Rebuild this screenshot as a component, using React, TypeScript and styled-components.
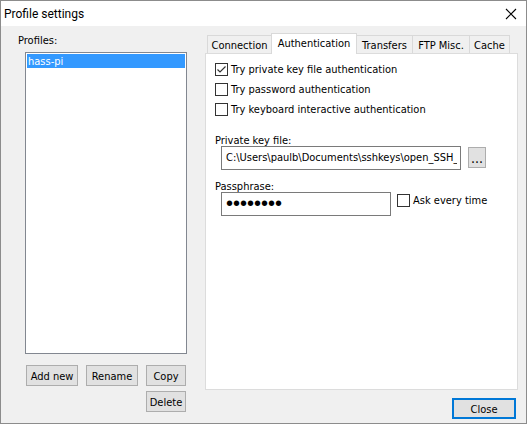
import React, { useState } from "react";
import styled, { createGlobalStyle } from "styled-components";

const GlobalStyle = createGlobalStyle`
  *, *::before, *::after { box-sizing: border-box; }
  body { margin: 0; }
  body, button, input, select {
    font-family: "DejaVu Sans Condensed", "DejaVu Sans", sans-serif;
    font-size: 11px;
    line-height: 14px;
    color: #000;
  }
`;

const Dialog = styled.main`
  display: flex;
  flex-direction: column;
  min-height: 100vh;
  border: 1px solid #8c8c8c;
  background: #f0f0f0;
`;

const TitleBar = styled.header`
  display: flex;
  align-items: center;
  justify-content: space-between;
  height: 25px;
  padding: 0 9px 0 3px;
  background: #fff;
`;

const Title = styled.h1`
  margin: 0;
  font: 400 12px/16px Roboto, sans-serif;
`;

const CloseIcon = styled.button`
  display: flex;
  padding: 0;
  border: 0;
  background: none;
`;

const Body = styled.div`
  flex: 1;
  display: flex;
  gap: 18px;
  padding: 0 8px 0 17px;
`;

const Sidebar = styled.section`
  display: flex;
  flex-direction: column;
  width: 169px;
  padding: 8px 0 11px;
`;

const ProfileList = styled.select`
  flex: 1;
  margin: 4px 0 0 7px;
  padding: 1px;
  border: 1px solid #828790;
  border-radius: 0;
  background: #fff;
  outline: 0;
  overflow: hidden;
`;

const ProfileOption = styled.option`
  min-height: 13px;
  padding: 1px 1px 0;
  line-height: 12px;

  &:checked {
    color: #fff;
    background: #39f linear-gradient(#39f, #39f);
  }
`;

const ButtonGrid = styled.div`
  display: grid;
  grid-template-columns: 52px 52px 40px;
  gap: 5px 8px;
  margin: 11px 0 0 8px;
`;

const PushButton = styled.button<{ $lastColumn?: boolean }>`
  height: 21px;
  ${(p) => p.$lastColumn && "grid-column: 3;"}
  padding: 2px 0 0;
  border: 1px solid #adadad;
  background: #e1e1e1;
  white-space: nowrap;
`;

const DefaultButton = styled(PushButton)`
  align-self: flex-end;
  width: 64px;
  margin: 8px 2px 0 0;
  border: 2px solid #0078d7;
`;

const Main = styled.section`
  flex: 1;
  min-width: 0;
  display: flex;
  flex-direction: column;
  padding: 7px 0 4px;
`;

const TabList = styled.div`
  display: flex;
  align-items: flex-end;
  padding: 0 2px;
`;

const Tab = styled.button<{ $active: boolean; $width: number }>`
  position: relative;
  z-index: ${(p) => (p.$active ? 1 : 0)};
  width: ${(p) => p.$width}px;
  height: ${(p) => (p.$active ? 21 : 18)}px;
  margin: ${(p) => (p.$active ? "0 0 -1px -1px" : "0 0 0 -1px")};
  padding: ${(p) => (p.$active ? "0 0 1px" : "2px 0 0")};
  border: 1px solid #d9d9d9;
  border-bottom: 0;
  background: ${(p) => (p.$active ? "#fff" : "#f0f0f0")};
  white-space: nowrap;

  &:first-child {
    margin-left: 0;
  }
`;

const Panel = styled.div`
  flex: 1;
  padding: 7px 9px;
  border: 1px solid #dcdcdc;
  background: #fff;
`;

const CheckLabel = styled.label`
  display: flex;
  align-items: flex-end;
  gap: 3px;
  height: 16px;
  white-space: nowrap;
`;

const CheckInput = styled.input`
  appearance: none;
  flex: none;
  width: 13px;
  height: 13px;
  margin: 0;
  border: 1px solid #333;
  background: #fff;
`;

const CheckBoxWrap = styled.span`
  position: relative;
  align-self: center;
  display: flex;
`;

const CheckMark = styled.svg`
  position: absolute;
  inset: 0;
  pointer-events: none;
`;

const CheckStack = styled.div`
  display: flex;
  flex-direction: column;
  gap: 4px;
`;

const Field = styled.div<{ $first?: boolean }>`
  margin-top: ${(p) => (p.$first ? 16 : 9)}px;
`;

const FieldLabel = styled.label`
  display: block;
  height: 13px;
  line-height: 16px;
`;

const FieldRow = styled.div<{ $gap: number }>`
  display: flex;
  gap: ${(p) => p.$gap}px;
  padding-left: 6px;
`;

const TextInput = styled.input<{ $width: number }>`
  width: ${(p) => p.$width}px;
  height: 24px;
  padding: 0 3px 2px 4px;
  border: 1px solid #7a7a7a;
  border-radius: 0;
  background: #fff;
  outline: 0;

  &[type="password"] {
    font-family: "Liberation Sans", sans-serif;
    font-size: 20px;
  }
`;

const BrowseButton = styled.button`
  width: 18px;
  height: 21px;
  margin-top: 1px;
  padding: 0;
  border: 1px solid #adadad;
  background: #e1e1e1;
  font-size: 14px;
`;

function Check({ label, initial = false }: { label: string; initial?: boolean }) {
  const [on, setOn] = useState(initial);
  return (
    <CheckLabel>
      <CheckBoxWrap>
        <CheckInput type="checkbox" checked={on} onChange={() => setOn(!on)} />
        {on && (
          <CheckMark width="13" height="13" viewBox="0 0 13 13" fill="none">
            <path d="M2.5 6.5L5 9L10.5 3.5" stroke="#333" strokeWidth="1.2" />
          </CheckMark>
        )}
      </CheckBoxWrap>
      {label}
    </CheckLabel>
  );
}

const tabs = [
  { name: "Connection", width: 65 },
  { name: "Authentication", width: 86 },
  { name: "Transfers", width: 57 },
  { name: "FTP Misc.", width: 58 },
  { name: "Cache", width: 41 },
];

export default function App() {
  const [active, setActive] = useState("Authentication");
  return (
    <>
      <GlobalStyle />
      <Dialog>
        <TitleBar>
          <Title>Profile settings</Title>
          <CloseIcon aria-label="Close window">
            <svg width="12" height="12" viewBox="0 0 12 12" fill="none">
              <path d="M1 1L11 11M11 1L1 11" stroke="#000" strokeWidth="1.1" />
            </svg>
          </CloseIcon>
        </TitleBar>
        <Body>
          <Sidebar>
            <label htmlFor="profiles">Profiles:</label>
            <ProfileList id="profiles" size={10} defaultValue="hass-pi">
              <ProfileOption value="hass-pi">hass-pi</ProfileOption>
            </ProfileList>
            <ButtonGrid>
              <PushButton>Add new</PushButton>
              <PushButton>Rename</PushButton>
              <PushButton>Copy</PushButton>
              <PushButton $lastColumn>Delete</PushButton>
            </ButtonGrid>
          </Sidebar>
          <Main>
            <TabList role="tablist">
              {tabs.map(({ name, width }) => (
                <Tab
                  key={name}
                  role="tab"
                  aria-selected={name === active}
                  $active={name === active}
                  $width={width}
                  onClick={() => setActive(name)}
                >
                  {name}
                </Tab>
              ))}
            </TabList>
            <Panel role="tabpanel">
              <CheckStack>
                <Check label="Try private key file authentication" initial />
                <Check label="Try password authentication" />
                <Check label="Try keyboard interactive authentication" />
              </CheckStack>
              <Field $first>
                <FieldLabel htmlFor="key-file">Private key file:</FieldLabel>
                <FieldRow $gap={7}>
                  <TextInput
                    id="key-file"
                    $width={240}
                    defaultValue="C:\Users\paulb\Documents\sshkeys\open_SSH_key"
                  />
                  <BrowseButton aria-label="Browse for key file">...</BrowseButton>
                </FieldRow>
              </Field>
              <Field>
                <FieldLabel htmlFor="passphrase">Passphrase:</FieldLabel>
                <FieldRow $gap={6}>
                  <TextInput id="passphrase" type="password" $width={170} defaultValue="password" />
                  <Check label="Ask every time" />
                </FieldRow>
              </Field>
            </Panel>
            <DefaultButton>Close</DefaultButton>
          </Main>
        </Body>
      </Dialog>
    </>
  );
}
